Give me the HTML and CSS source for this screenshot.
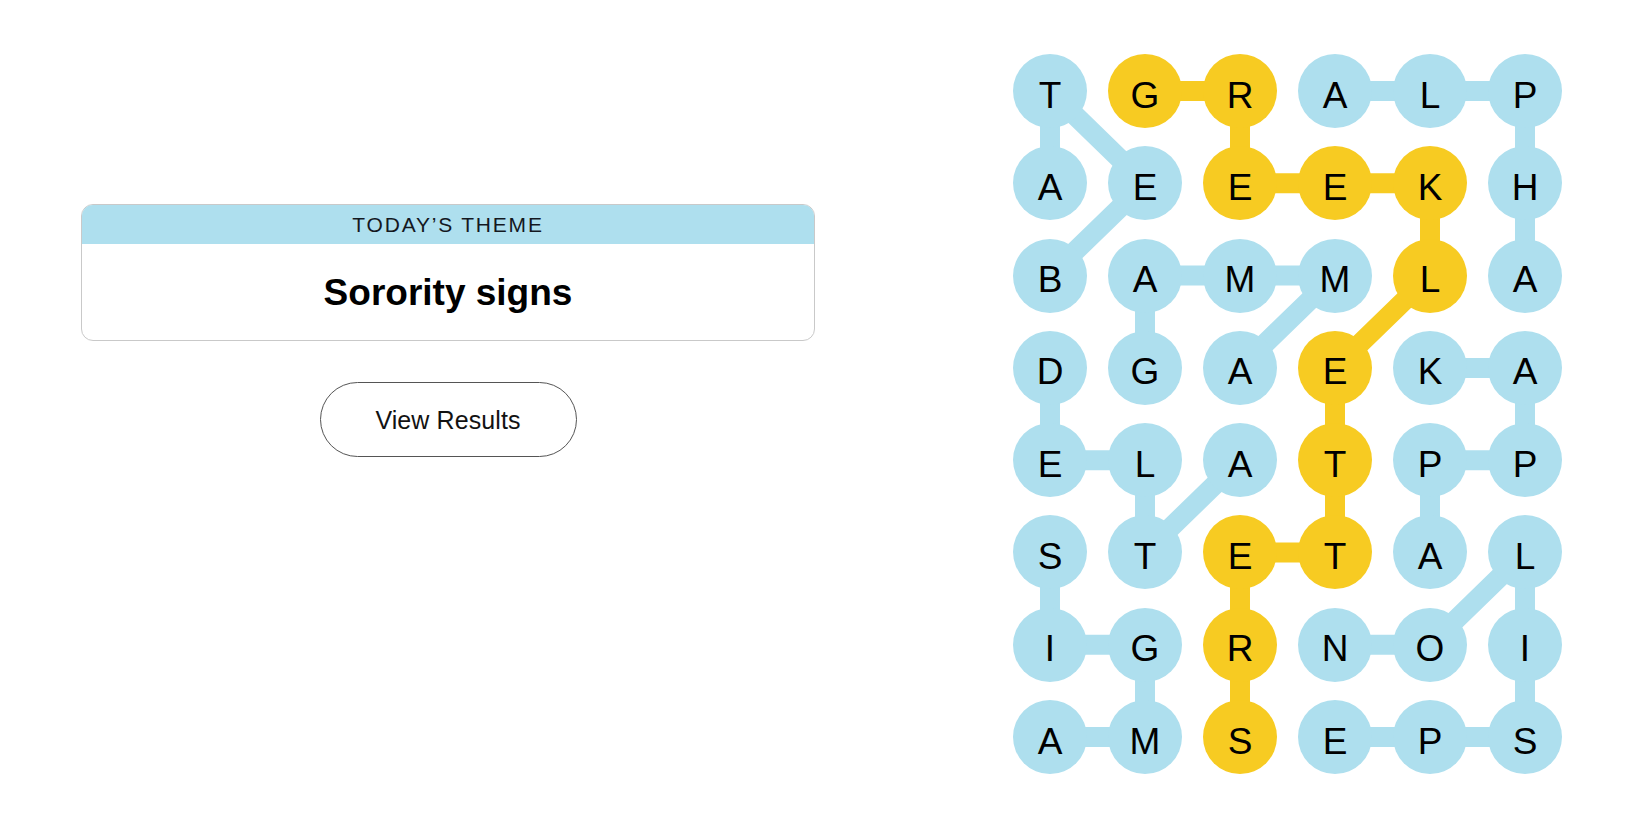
FILE: index.html
```html
<!DOCTYPE html>
<html lang="en">
<head>
<meta charset="utf-8">
<title>Strands</title>
<link rel="stylesheet" href="styles.css">
</head>
<body>
<main class="page">
  <section class="left">
    <div class="theme-card">
      <div class="theme-header">TODAY’S THEME</div>
      <div class="theme-body">Sorority signs</div>
    </div>
    <button class="results-btn">View Results</button>
  </section>
  <section class="right">
    <div class="board">
      <svg class="links" viewBox="0 0 549 720" width="549" height="720" aria-hidden="true">
        <g fill="none" stroke-width="20" stroke-linejoin="round" stroke-linecap="round">
          <polyline class="blue-line" points="37,221.6 132,129.3 37,37 37,129.3"/>
          <polyline class="blue-line" points="322,37 417,37 512,37 512,129.3 512,221.6"/>
          <polyline class="blue-line" points="132,313.9 132,221.6 227,221.6 322,221.6 227,313.9"/>
          <polyline class="blue-line" points="37,313.9 37,406.2 132,406.2 132,498.5 227,406.2"/>
          <polyline class="blue-line" points="417,313.9 512,313.9 512,406.2 417,406.2 417,498.5"/>
          <polyline class="blue-line" points="37,498.5 37,590.8 132,590.8 132,683.1 37,683.1"/>
          <polyline class="blue-line" points="322,683.1 417,683.1 512,683.1 512,590.8 512,498.5 417,590.8 322,590.8"/>
          <polyline class="gold-line" points="132,37 227,37 227,129.3 322,129.3 417,129.3 417,221.6 322,313.9 322,406.2 322,498.5 227,498.5 227,590.8 227,683.1"/>
        </g>
      </svg>
      <div class="cell blue">T</div><div class="cell gold">G</div><div class="cell gold">R</div><div class="cell blue">A</div><div class="cell blue">L</div><div class="cell blue">P</div>
      <div class="cell blue">A</div><div class="cell blue">E</div><div class="cell gold">E</div><div class="cell gold">E</div><div class="cell gold">K</div><div class="cell blue">H</div>
      <div class="cell blue">B</div><div class="cell blue">A</div><div class="cell blue">M</div><div class="cell blue">M</div><div class="cell gold">L</div><div class="cell blue">A</div>
      <div class="cell blue">D</div><div class="cell blue">G</div><div class="cell blue">A</div><div class="cell gold">E</div><div class="cell blue">K</div><div class="cell blue">A</div>
      <div class="cell blue">E</div><div class="cell blue">L</div><div class="cell blue">A</div><div class="cell gold">T</div><div class="cell blue">P</div><div class="cell blue">P</div>
      <div class="cell blue">S</div><div class="cell blue">T</div><div class="cell gold">E</div><div class="cell gold">T</div><div class="cell blue">A</div><div class="cell blue">L</div>
      <div class="cell blue">I</div><div class="cell blue">G</div><div class="cell gold">R</div><div class="cell blue">N</div><div class="cell blue">O</div><div class="cell blue">I</div>
      <div class="cell blue">A</div><div class="cell blue">M</div><div class="cell gold">S</div><div class="cell blue">E</div><div class="cell blue">P</div><div class="cell blue">S</div>
    </div>
  </section>
</main>
</body>
</html>
```

FILE: styles.css
```css
html, body {
  margin: 0;
  padding: 0;
  background: #ffffff;
}

body {
  font-family: "Liberation Sans", Arial, sans-serif;
  color: #121212;
}

.page {
  display: flex;
  width: 1650px;
  height: 825px;
}

.left {
  width: 896px;
  box-sizing: border-box;
  padding: 204px 81px 0;
  display: flex;
  flex-direction: column;
  align-items: center;
}

.theme-card {
  width: 734px;
  box-sizing: border-box;
  border: 1px solid #c9c9c9;
  border-radius: 12px;
  overflow: hidden;
  background: #fff;
}

.theme-header {
  height: 39px;
  background: #aedfee;
  display: flex;
  align-items: center;
  justify-content: center;
  font-size: 21px;
  letter-spacing: 1.8px;
  color: #14181f;
  padding-top: 1px;
  box-sizing: border-box;
}

.theme-body {
  height: 96px;
  display: flex;
  align-items: center;
  justify-content: center;
  font-size: 37px;
  font-weight: 700;
  color: #000;
  padding-top: 1px;
  box-sizing: border-box;
}

.results-btn {
  margin-top: 41px;
  width: 257px;
  height: 75px;
  border: 1px solid #555;
  border-radius: 38px;
  background: #fff;
  font-family: "Liberation Sans", Arial, sans-serif;
  font-size: 25px;
  letter-spacing: 0.1px;
  color: #121212;
  padding: 2px 0 0;
  cursor: pointer;
}

.right {
  padding: 54px 0 0 117px;
}

.board {
  position: relative;
  display: grid;
  grid-template-columns: repeat(6, 74px);
  grid-template-rows: repeat(8, 74px);
  column-gap: 21px;
  row-gap: 18.3px;
  width: 549px;
}

.links {
  position: absolute;
  left: 0;
  top: 0;
  z-index: 0;
}

.blue-line { stroke: #aedfee; }
.gold-line { stroke: #f7cb22; }

.cell {
  position: relative;
  z-index: 1;
  width: 74px;
  height: 74px;
  box-sizing: border-box;
  padding-top: 8px;
  border-radius: 50%;
  display: flex;
  align-items: center;
  justify-content: center;
  font-size: 37px;
  line-height: 1;
  color: #000;
}

.cell.blue { background: #aedfee; }
.cell.gold { background: #f7cb22; }
```
